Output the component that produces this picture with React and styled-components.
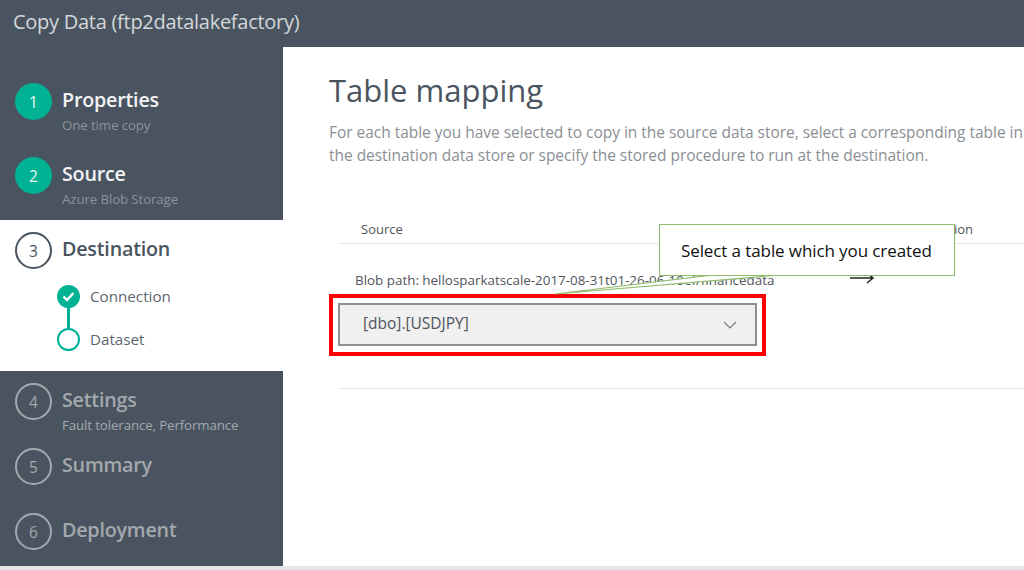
import React from "react";
import styled, { createGlobalStyle } from "styled-components";

const GlobalStyle = createGlobalStyle`
  html, body {
    margin: 0;
    padding: 0;
    height: 100%;
    overflow: hidden;
    background: #e6e6e6;
    font-family: "Open Sans", "Noto Sans", sans-serif;
  }
`;

const dark = "#4a5460";
const green = "#00b294";

const Page = styled.div`
  width: 1024px;
  height: 566px;
  display: flex;
  flex-direction: column;
  overflow: hidden;
  background: #fff;
`;

const Header = styled.header`
  height: 47px;
  flex: none;
  display: flex;
  align-items: center;
  padding: 0 0 4px 13px;
  box-sizing: border-box;
  background: ${dark};
  color: #d4d7da;
  font-size: 20px;
  letter-spacing: -0.27px;
`;

const Body = styled.div`
  flex: 1;
  display: flex;
  min-height: 0;
`;

const Sidebar = styled.nav`
  width: 282.5px;
  flex: none;
  display: flex;
  flex-direction: column;
  background: ${dark};
`;

const DoneGroup = styled.div`
  padding-top: 36px;
`;

const PendingGroup = styled.div`
  padding-top: 12px;
`;

const ActivePanel = styled.div`
  height: 151px;
  box-sizing: border-box;
  padding-top: 12px;
  background: #fff;
`;

const Step = styled.div`
  height: ${(p) => p.$height}px;
  display: flex;
  gap: 10px;
  padding-left: 15px;
  box-sizing: border-box;
`;

const Circle = styled.div`
  width: 37px;
  height: 37px;
  flex: none;
  box-sizing: border-box;
  border-radius: 50%;
  display: flex;
  align-items: center;
  justify-content: center;
  font-size: 15.5px;
  ${(p) =>
    p.$state === "done" &&
    `background: ${green}; color: #e8f7f4;`}
  ${(p) =>
    p.$state === "active" &&
    `border: 2px solid ${dark}; color: ${dark};`}
  ${(p) =>
    p.$state === "pending" &&
    `border: 2px solid #a3a8ad; color: #a3a8ad;`}
`;

const StepText = styled.div`
  display: flex;
  flex-direction: column;
`;

const StepTitle = styled.div`
  font-size: 19.7px;
  font-weight: 600;
  line-height: 34px;
  letter-spacing: -0.2px;
  color: ${(p) =>
    p.$state === "done" ? "#f2f3f4" : p.$state === "active" ? dark : "#a3a8ad"};
`;

const StepNote = styled.div`
  font-size: 13.3px;
  line-height: 18px;
  margin-top: -1px;
  letter-spacing: -0.12px;
  color: ${(p) => (p.$state === "pending" ? "#a3a8ad" : "#8b929a")};
`;

const SubSteps = styled.div`
  display: flex;
  flex-direction: column;
  padding: 9px 0 0 57px;
`;

const SubStep = styled.div`
  position: relative;
  display: flex;
  align-items: center;
  gap: 10px;
  height: 22px;
  margin-bottom: 21px;
  font-size: 15.2px;
  color: #5d6670;
`;

const SubDot = styled.div`
  width: 23px;
  height: 23px;
  flex: none;
  box-sizing: border-box;
  border-radius: 50%;
  display: flex;
  align-items: center;
  justify-content: center;
  border: 2px solid ${green};
  background: ${(p) => (p.$filled ? green : "#fff")};
`;

const Connector = styled.div`
  position: absolute;
  left: 10px;
  top: 22px;
  width: 3px;
  height: 21px;
  background: ${green};
`;

const Content = styled.main`
  flex: 1;
  min-width: 0;
  position: relative;
  padding: 19px 0 0 46.5px;
  overflow: hidden;
`;

const Title = styled.h1`
  margin: 0;
  font-size: 31px;
  font-weight: 400;
  line-height: 48px;
  color: ${dark};
`;

const Intro = styled.p`
  margin: 7px 0 0;
  width: 760px;
  font-size: 15.5px;
  line-height: 23px;
  letter-spacing: -0.03px;
  color: #8b8f94;
  white-space: nowrap;
`;

const Table = styled.div`
  margin: 52px 0 0 9px;
`;

const HeadRow = styled.div`
  height: 24px;
  display: flex;
  justify-content: space-between;
  padding: 0 51px 0 23px;
  border-bottom: 1px solid #e6e6e6;
  font-size: 13px;
  line-height: 20px;
  color: #4f555c;
`;

const SourceRow = styled.div`
  display: flex;
  align-items: center;
  height: 50px;
  box-sizing: border-box;
  padding: 22px 0 0 17px;
  font-size: 13.4px;
  color: #4f555c;
  white-space: nowrap;
`;

const ArrowIcon = styled.svg`
  width: 26px;
  height: 12px;
  margin: -4px 0 0 75px;
`;

const RedFrame = styled.div`
  width: 437px;
  height: 62px;
  margin-left: -9px;
  box-sizing: border-box;
  padding: 5px;
  border: 4px solid #fe0000;
`;

const Select = styled.div`
  height: 43px;
  box-sizing: border-box;
  display: flex;
  align-items: center;
  justify-content: space-between;
  padding: 0 18px 3px 23px;
  border: 2px solid #8f8f8f;
  background: #f0f0f0;
  font-size: 15.5px;
  color: #4f555c;
`;

const Chevron = styled.svg`
  width: 14px;
  height: 8px;
  margin-top: 3px;
`;

const RowEnd = styled.div`
  margin-top: 32px;
  border-bottom: 1px solid #e6e6e6;
`;

const Callout = styled.div`
  position: absolute;
  left: 376.5px;
  top: 177px;
  width: 296px;
  height: 52px;
  box-sizing: border-box;
  display: flex;
  align-items: center;
  padding: 1px 0 0 21px;
  border: 1px solid #8fbc6a;
  background: #fff;
  font-size: 17px;
  letter-spacing: -0.1px;
  color: #111;
`;

const CalloutTail = styled.svg`
  position: absolute;
  left: 269.5px;
  top: 228px;
  width: 240px;
  height: 20px;
`;

const steps = {
  done: [
    { n: 1, title: "Properties", note: "One time copy", height: 74 },
    { n: 2, title: "Source", note: "Azure Blob Storage", height: 63 },
  ],
  pending: [
    { n: 4, title: "Settings", note: "Fault tolerance, Performance", height: 65 },
    { n: 5, title: "Summary", height: 65 },
    { n: 6, title: "Deployment", height: 53 },
  ],
};

function StepItem({ n, title, note, height, state }) {
  return (
    <Step $height={height}>
      <Circle $state={state}>{n}</Circle>
      <StepText>
        <StepTitle $state={state}>{title}</StepTitle>
        {note && <StepNote $state={state}>{note}</StepNote>}
      </StepText>
    </Step>
  );
}

export default function App() {
  return (
    <Page>
      <GlobalStyle />
      <Header>Copy Data (ftp2datalakefactory)</Header>
      <Body>
        <Sidebar>
          <DoneGroup>
            {steps.done.map((s) => (
              <StepItem key={s.n} {...s} state="done" />
            ))}
          </DoneGroup>
          <ActivePanel>
            <StepItem n={3} title="Destination" height={44} state="active" />
            <SubSteps>
              <SubStep>
                <SubDot $filled>
                  <svg width="13" height="11" viewBox="0 0 13 11" fill="none">
                    <path d="M1.5 5.5 L5 9 L11.5 2" stroke="#fff" strokeWidth="2.4" />
                  </svg>
                </SubDot>
                Connection
                <Connector />
              </SubStep>
              <SubStep>
                <SubDot />
                Dataset
              </SubStep>
            </SubSteps>
          </ActivePanel>
          <PendingGroup>
            {steps.pending.map((s) => (
              <StepItem key={s.n} {...s} state="pending" />
            ))}
          </PendingGroup>
        </Sidebar>
        <Content>
          <Title>Table mapping</Title>
          <Intro>
            For each table you have selected to copy in the source data store, select a corresponding table in
            <br />
            the destination data store or specify the stored procedure to run at the destination.
          </Intro>
          <Table>
            <HeadRow>
              <span>Source</span>
              <span>Destination</span>
            </HeadRow>
            <SourceRow>
              Blob path: hellosparkatscale-2017-08-31t01-26-06-10ef/financedata
              <ArrowIcon viewBox="0 0 26 12" fill="none">
                <path d="M1 6 H24 M18 1 L24 6 L18 11" stroke="#222" strokeWidth="1.5" />
              </ArrowIcon>
            </SourceRow>
            <RedFrame>
              <Select>
                [dbo].[USDJPY]
                <Chevron viewBox="0 0 14 8" fill="none">
                  <path d="M1 1 L7 7 L13 1" stroke="#777" strokeWidth="1.1" />
                </Chevron>
              </Select>
            </RedFrame>
            <RowEnd />
          </Table>
          <CalloutTail viewBox="0 0 240 20">
            <path d="M161 0 L3 19 L228 0" fill="#fff" stroke="#8fbc6a" strokeWidth="1.2" />
          </CalloutTail>
          <Callout>Select a table which you created</Callout>
        </Content>
      </Body>
    </Page>
  );
}
